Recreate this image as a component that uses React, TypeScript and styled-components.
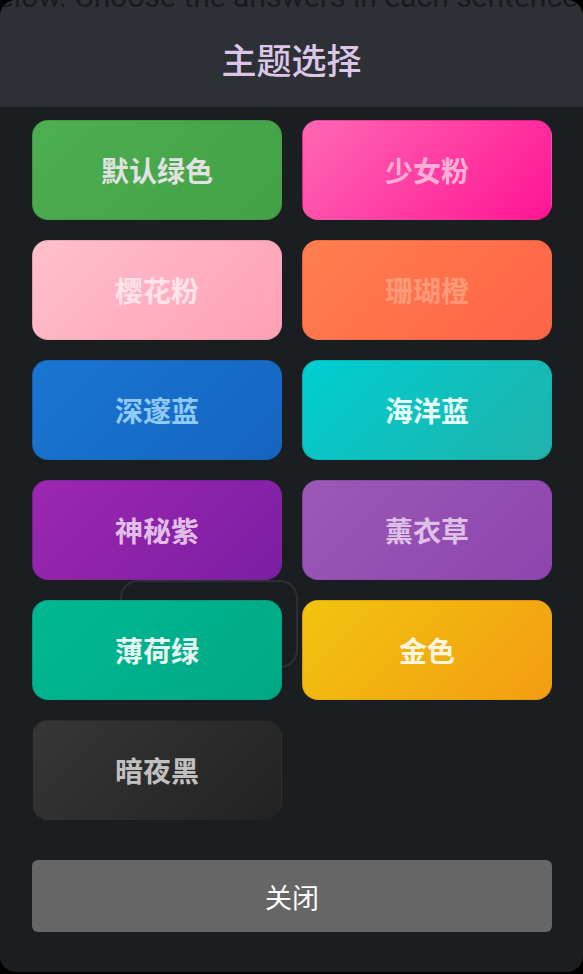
import styled, { createGlobalStyle } from "styled-components"

const GlobalStyle = createGlobalStyle`
  html, body {
    margin: 0;
    padding: 0;
    background: #000;
  }
  * { box-sizing: border-box; }
`

const Page = styled.div`
  position: relative;
  width: 583px;
  height: 974px;
  overflow: hidden;
  background: #000;
`

const BackdropText = styled.div`
  position: absolute;
  top: -18px;
  left: -19px;
  z-index: 3;
  white-space: nowrap;
  font-family: Roboto, "Liberation Sans", sans-serif;
  font-size: 30px;
  line-height: 30px;
  color: rgba(10, 12, 14, 0.6);
  pointer-events: none;
`

const Modal = styled.div`
  display: flex;
  flex-direction: column;
  width: 583px;
  height: 972px;
  background: #1b1e21;
  border-radius: 16px;
  overflow: hidden;
  font-family: "Noto Sans CJK SC", "Noto Sans", sans-serif;
`

const Header = styled.div`
  display: flex;
  align-items: center;
  justify-content: center;
  height: 107px;
  padding-top: 10px;
  background: #2d3034;
`

const Title = styled.h2`
  margin: 0;
  font-size: 35px;
  font-weight: 500;
  line-height: 1;
  color: #dcc6e8;
`

const Body = styled.div`
  position: relative;
  display: flex;
  flex-direction: column;
  padding: 13px 31px 40px 32px;
`

const Ghost = styled.div`
  position: absolute;
  left: 120px;
  top: 473px;
  width: 178px;
  height: 88px;
  border: 2px solid #2c3034;
  border-radius: 18px;
`

const Grid = styled.div`
  position: relative;
  display: grid;
  grid-template-columns: 250px 250px;
  grid-auto-rows: 100px;
  gap: 20px;
`

const ThemeButton = styled.button<{ $from: string; $to: string; $text: string }>`
  display: flex;
  align-items: center;
  justify-content: center;
  border: 1px solid rgba(0, 0, 0, 0.08);
  border-radius: 16px;
  background: linear-gradient(135deg, ${(p) => p.$from}, ${(p) => p.$to});
  color: ${(p) => p.$text};
  font-family: inherit;
  font-size: 28px;
  font-weight: 700;
  cursor: pointer;
`

const CloseButton = styled.button`
  margin-top: 40px;
  height: 72px;
  border: none;
  border-radius: 6px;
  background: #666;
  color: #fff;
  font-family: inherit;
  font-size: 27px;
  font-weight: 400;
  cursor: pointer;
`

const themes = [
  { name: "默认绿色", from: "#4caf50", to: "#43a047", text: "#e2e2e2" },
  { name: "少女粉", from: "#ff69b4", to: "#ff1493", text: "#ffb0d6" },
  { name: "樱花粉", from: "#ffc0cb", to: "#ffa0b6", text: "#ffe3ea" },
  { name: "珊瑚橙", from: "#ff7f50", to: "#ff6347", text: "#ff9a78" },
  { name: "深邃蓝", from: "#1976d2", to: "#1565c0", text: "#90caf9" },
  { name: "海洋蓝", from: "#00ced1", to: "#20b2aa", text: "#e6ffff" },
  { name: "神秘紫", from: "#9c27b0", to: "#7b1fa2", text: "#e1bee7" },
  { name: "薰衣草", from: "#9b59b6", to: "#8e44ad", text: "#dcc0e6" },
  { name: "薄荷绿", from: "#00b894", to: "#00a884", text: "#e6f7f1" },
  { name: "金色", from: "#f1c40f", to: "#f39c12", text: "#fff6e0" },
  { name: "暗夜黑", from: "#363636", to: "#222222", text: "#c0c0c0" },
]

export default function App() {
  return (
    <Page>
      <GlobalStyle />
      <BackdropText>below. Choose the answers in each sentence below</BackdropText>
      <Modal>
        <Header>
          <Title>主题选择</Title>
        </Header>
        <Body>
          <Ghost />
          <Grid>
            {themes.map((t) => (
              <ThemeButton key={t.name} $from={t.from} $to={t.to} $text={t.text}>
                {t.name}
              </ThemeButton>
            ))}
          </Grid>
          <CloseButton>关闭</CloseButton>
        </Body>
      </Modal>
    </Page>
  )
}
